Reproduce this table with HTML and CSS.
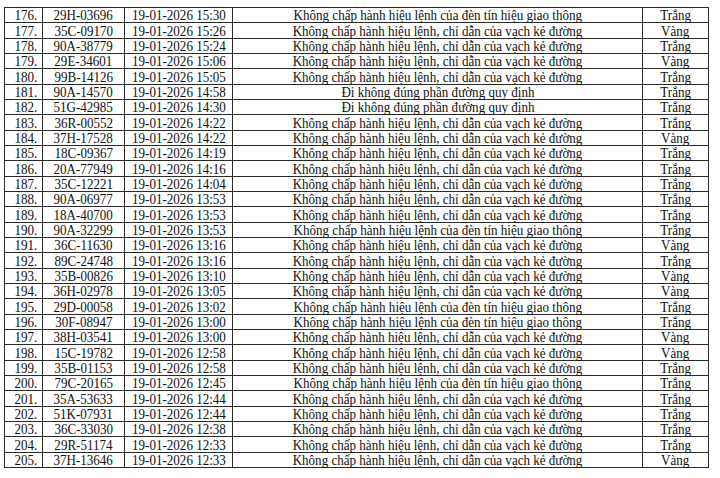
FILE: index.html
```html
<!DOCTYPE html>
<html>
<head>
<meta charset="utf-8">
<link rel="stylesheet" href="styles.css">
</head>
<body>
<table class="tbl">
<colgroup><col class="c1"><col class="c2"><col class="c3"><col class="c4"><col class="c5"></colgroup>
<tbody>
<tr><td class="n"><span>176.</span></td><td><span>29H-03696</span></td><td><span>19-01-2026 15:30</span></td><td><span>Không chấp hành hiệu lệnh của đèn tín hiệu giao thông</span></td><td><span>Trắng</span></td></tr>
<tr><td class="n"><span>177.</span></td><td><span>35C-09170</span></td><td><span>19-01-2026 15:26</span></td><td><span>Không chấp hành hiệu lệnh, chỉ dẫn của vạch kẻ đường</span></td><td><span>Vàng</span></td></tr>
<tr><td class="n"><span>178.</span></td><td><span>90A-38779</span></td><td><span>19-01-2026 15:24</span></td><td><span>Không chấp hành hiệu lệnh, chỉ dẫn của vạch kẻ đường</span></td><td><span>Trắng</span></td></tr>
<tr><td class="n"><span>179.</span></td><td><span>29E-34601</span></td><td><span>19-01-2026 15:06</span></td><td><span>Không chấp hành hiệu lệnh, chỉ dẫn của vạch kẻ đường</span></td><td><span>Vàng</span></td></tr>
<tr><td class="n"><span>180.</span></td><td><span>99B-14126</span></td><td><span>19-01-2026 15:05</span></td><td><span>Không chấp hành hiệu lệnh, chỉ dẫn của vạch kẻ đường</span></td><td><span>Trắng</span></td></tr>
<tr><td class="n"><span>181.</span></td><td><span>90A-14570</span></td><td><span>19-01-2026 14:58</span></td><td><span>Đi không đúng phần đường quy định</span></td><td><span>Trắng</span></td></tr>
<tr><td class="n"><span>182.</span></td><td><span>51G-42985</span></td><td><span>19-01-2026 14:30</span></td><td><span>Đi không đúng phần đường quy định</span></td><td><span>Trắng</span></td></tr>
<tr><td class="n"><span>183.</span></td><td><span>36R-00552</span></td><td><span>19-01-2026 14:22</span></td><td><span>Không chấp hành hiệu lệnh, chỉ dẫn của vạch kẻ đường</span></td><td><span>Trắng</span></td></tr>
<tr><td class="n"><span>184.</span></td><td><span>37H-17528</span></td><td><span>19-01-2026 14:22</span></td><td><span>Không chấp hành hiệu lệnh, chỉ dẫn của vạch kẻ đường</span></td><td><span>Vàng</span></td></tr>
<tr><td class="n"><span>185.</span></td><td><span>18C-09367</span></td><td><span>19-01-2026 14:19</span></td><td><span>Không chấp hành hiệu lệnh, chỉ dẫn của vạch kẻ đường</span></td><td><span>Trắng</span></td></tr>
<tr><td class="n"><span>186.</span></td><td><span>20A-77949</span></td><td><span>19-01-2026 14:16</span></td><td><span>Không chấp hành hiệu lệnh, chỉ dẫn của vạch kẻ đường</span></td><td><span>Trắng</span></td></tr>
<tr><td class="n"><span>187.</span></td><td><span>35C-12221</span></td><td><span>19-01-2026 14:04</span></td><td><span>Không chấp hành hiệu lệnh, chỉ dẫn của vạch kẻ đường</span></td><td><span>Trắng</span></td></tr>
<tr><td class="n"><span>188.</span></td><td><span>90A-06977</span></td><td><span>19-01-2026 13:53</span></td><td><span>Không chấp hành hiệu lệnh, chỉ dẫn của vạch kẻ đường</span></td><td><span>Trắng</span></td></tr>
<tr><td class="n"><span>189.</span></td><td><span>18A-40700</span></td><td><span>19-01-2026 13:53</span></td><td><span>Không chấp hành hiệu lệnh, chỉ dẫn của vạch kẻ đường</span></td><td><span>Trắng</span></td></tr>
<tr><td class="n"><span>190.</span></td><td><span>90A-32299</span></td><td><span>19-01-2026 13:53</span></td><td><span>Không chấp hành hiệu lệnh của đèn tín hiệu giao thông</span></td><td><span>Trắng</span></td></tr>
<tr><td class="n"><span>191.</span></td><td><span>36C-11630</span></td><td><span>19-01-2026 13:16</span></td><td><span>Không chấp hành hiệu lệnh, chỉ dẫn của vạch kẻ đường</span></td><td><span>Vàng</span></td></tr>
<tr><td class="n"><span>192.</span></td><td><span>89C-24748</span></td><td><span>19-01-2026 13:16</span></td><td><span>Không chấp hành hiệu lệnh, chỉ dẫn của vạch kẻ đường</span></td><td><span>Trắng</span></td></tr>
<tr><td class="n"><span>193.</span></td><td><span>35B-00826</span></td><td><span>19-01-2026 13:10</span></td><td><span>Không chấp hành hiệu lệnh, chỉ dẫn của vạch kẻ đường</span></td><td><span>Vàng</span></td></tr>
<tr><td class="n"><span>194.</span></td><td><span>36H-02978</span></td><td><span>19-01-2026 13:05</span></td><td><span>Không chấp hành hiệu lệnh, chỉ dẫn của vạch kẻ đường</span></td><td><span>Vàng</span></td></tr>
<tr><td class="n"><span>195.</span></td><td><span>29D-00058</span></td><td><span>19-01-2026 13:02</span></td><td><span>Không chấp hành hiệu lệnh của đèn tín hiệu giao thông</span></td><td><span>Trắng</span></td></tr>
<tr><td class="n"><span>196.</span></td><td><span>30F-08947</span></td><td><span>19-01-2026 13:00</span></td><td><span>Không chấp hành hiệu lệnh của đèn tín hiệu giao thông</span></td><td><span>Trắng</span></td></tr>
<tr><td class="n"><span>197.</span></td><td><span>38H-03541</span></td><td><span>19-01-2026 13:00</span></td><td><span>Không chấp hành hiệu lệnh, chỉ dẫn của vạch kẻ đường</span></td><td><span>Vàng</span></td></tr>
<tr><td class="n"><span>198.</span></td><td><span>15C-19782</span></td><td><span>19-01-2026 12:58</span></td><td><span>Không chấp hành hiệu lệnh, chỉ dẫn của vạch kẻ đường</span></td><td><span>Vàng</span></td></tr>
<tr><td class="n"><span>199.</span></td><td><span>35B-01153</span></td><td><span>19-01-2026 12:58</span></td><td><span>Không chấp hành hiệu lệnh, chỉ dẫn của vạch kẻ đường</span></td><td><span>Trắng</span></td></tr>
<tr><td class="n"><span>200.</span></td><td><span>79C-20165</span></td><td><span>19-01-2026 12:45</span></td><td><span>Không chấp hành hiệu lệnh của đèn tín hiệu giao thông</span></td><td><span>Trắng</span></td></tr>
<tr><td class="n"><span>201.</span></td><td><span>35A-53633</span></td><td><span>19-01-2026 12:44</span></td><td><span>Không chấp hành hiệu lệnh, chỉ dẫn của vạch kẻ đường</span></td><td><span>Trắng</span></td></tr>
<tr><td class="n"><span>202.</span></td><td><span>51K-07931</span></td><td><span>19-01-2026 12:44</span></td><td><span>Không chấp hành hiệu lệnh, chỉ dẫn của vạch kẻ đường</span></td><td><span>Trắng</span></td></tr>
<tr><td class="n"><span>203.</span></td><td><span>36C-33030</span></td><td><span>19-01-2026 12:38</span></td><td><span>Không chấp hành hiệu lệnh, chỉ dẫn của vạch kẻ đường</span></td><td><span>Trắng</span></td></tr>
<tr><td class="n"><span>204.</span></td><td><span>29R-51174</span></td><td><span>19-01-2026 12:33</span></td><td><span>Không chấp hành hiệu lệnh, chỉ dẫn của vạch kẻ đường</span></td><td><span>Trắng</span></td></tr>
<tr><td class="n"><span>205.</span></td><td><span>37H-13646</span></td><td><span>19-01-2026 12:33</span></td><td><span>Không chấp hành hiệu lệnh, chỉ dẫn của vạch kẻ đường</span></td><td><span>Vàng</span></td></tr>
</tbody>
</table>
</body>
</html>
```
FILE: styles.css
```css
html, body {
  margin: 0;
  padding: 0;
  background: #ffffff;
}
body {
  padding: 7px 0 0 4px;
  font-family: "Liberation Serif", "Times New Roman", serif;
  color: #111;
}
.tbl {
  border-collapse: collapse;
  table-layout: fixed;
  width: 704px;
  font-size: 15px;
}
.c1 { width: 38px; }
.c2 { width: 82px; }
.c3 { width: 108px; }
.c4 { width: 410px; }
.c5 { width: 66px; }
.tbl tr {
  height: 15.33px;
}
.tbl td {
  border: 1px solid #2a2a2a;
  padding: 0;
  text-align: center;
  line-height: 14px;
  white-space: nowrap;
  overflow: visible;
  vertical-align: bottom;
}
.tbl td span {
  display: inline-block;
  transform: scaleX(0.87);
  transform-origin: center;
}
.tbl td.n {
  text-align: right;
  padding-right: 5px;
}
.tbl td.n span {
  transform-origin: right;
}
```
